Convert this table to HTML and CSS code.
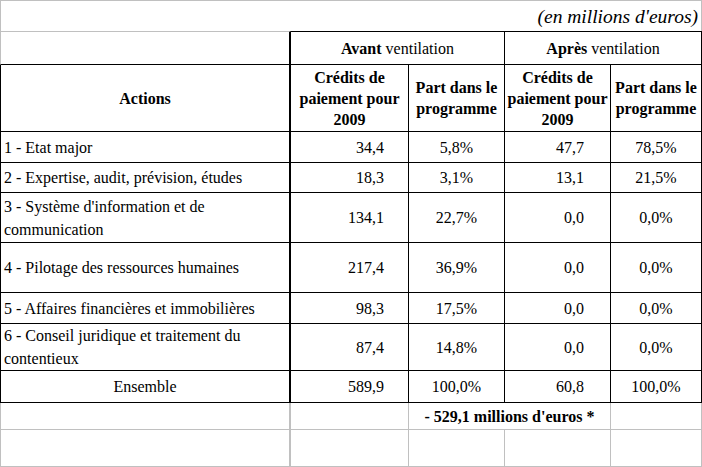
FILE: index.html
```html
<!DOCTYPE html>
<html lang="fr">
<head>
<meta charset="utf-8">
<title>Ventilation</title>
<link rel="stylesheet" href="styles.css">
</head>
<body>
<div class="sheet">
  <div class="cell caption">(en millions d'euros)</div>

  <div class="cell label blank-head"></div>
  <div class="cell group span-2"><span><b>Avant</b> ventilation</span></div>
  <div class="cell group span-2"><span><b>Après</b> ventilation</span></div>

  <div class="cell label center head">Actions</div>
  <div class="cell center head">Crédits de<br>paiement pour<br>2009</div>
  <div class="cell center head">Part dans le<br>programme</div>
  <div class="cell center head">Crédits de<br>paiement pour<br>2009</div>
  <div class="cell center head">Part dans le<br>programme</div>

  <div class="cell label">1 - Etat major</div>
  <div class="cell num">34,4</div>
  <div class="cell pct">5,8%</div>
  <div class="cell num after">47,7</div>
  <div class="cell pct">78,5%</div>

  <div class="cell label">2 - Expertise, audit, prévision, études</div>
  <div class="cell num">18,3</div>
  <div class="cell pct">3,1%</div>
  <div class="cell num after">13,1</div>
  <div class="cell pct">21,5%</div>

  <div class="cell label">3 - Système d'information et de<br>communication</div>
  <div class="cell num">134,1</div>
  <div class="cell pct">22,7%</div>
  <div class="cell num after">0,0</div>
  <div class="cell pct">0,0%</div>

  <div class="cell label">4 - Pilotage des ressources humaines</div>
  <div class="cell num">217,4</div>
  <div class="cell pct">36,9%</div>
  <div class="cell num after">0,0</div>
  <div class="cell pct">0,0%</div>

  <div class="cell label">5 - Affaires financières et immobilières</div>
  <div class="cell num">98,3</div>
  <div class="cell pct">17,5%</div>
  <div class="cell num after">0,0</div>
  <div class="cell pct">0,0%</div>

  <div class="cell label">6 - Conseil juridique et traitement du<br>contentieux</div>
  <div class="cell num">87,4</div>
  <div class="cell pct">14,8%</div>
  <div class="cell num after">0,0</div>
  <div class="cell pct">0,0%</div>

  <div class="cell label center">Ensemble</div>
  <div class="cell num">589,9</div>
  <div class="cell pct">100,0%</div>
  <div class="cell num after">60,8</div>
  <div class="cell pct">100,0%</div>

  <div class="cell label gray"></div>
  <div class="cell gray"></div>
  <div class="cell gray span-2 center total">- 529,1 millions d'euros *</div>
  <div class="cell gray"></div>

  <div class="cell label gray"></div>
  <div class="cell gray"></div>
  <div class="cell gray"></div>
  <div class="cell gray"></div>
  <div class="cell gray"></div>
</div>
</body>
</html>
```

FILE: styles.css
```css
html, body {
  margin: 0;
  padding: 0;
  background: #ffffff;
}

body {
  font-family: "Liberation Serif", "Times New Roman", serif;
  font-size: 16px;
  color: #000000;
  line-height: 23px;
}

.sheet {
  display: grid;
  grid-template-columns: 291px 118px 96px 106px 91px;
  grid-template-rows: 31px 34px 67px 31px 30px 50px 50px 31px 47px 32px 27px 37px;
  width: 702px;
  height: 467px;
}

.cell {
  box-sizing: border-box;
  display: flex;
  align-items: center;
  min-width: 0;
  overflow: hidden;
  white-space: nowrap;
  border-right: 1px solid #000000;
  border-bottom: 1px solid #000000;
}

.caption {
  grid-column: 1 / -1;
  justify-content: flex-end;
  border: 1px solid #c0c0c0;
  border-bottom: none;
  padding-right: 3px;
  font-style: italic;
  font-size: 19.5px;
}

.label {
  border-left: 1px solid #000000;
  border-right-width: 2px;
  padding-left: 3px;
}

.blank-head {
  border-top: 1px solid #c0c0c0;
  border-left-color: #c0c0c0;
}

.group {
  justify-content: center;
  border-top: 1px solid #000000;
}

.span-2 {
  grid-column: span 2;
}

.center {
  justify-content: center;
  text-align: center;
}

.label.center {
  padding-left: 0;
}

.head {
  font-weight: bold;
  line-height: 21px;
}

.num {
  justify-content: flex-end;
  padding-right: 24px;
}

.num.after {
  padding-right: 26px;
}

.pct {
  justify-content: center;
}

.total {
  font-weight: bold;
}

.gray {
  border-color: #c0c0c0;
}
```
